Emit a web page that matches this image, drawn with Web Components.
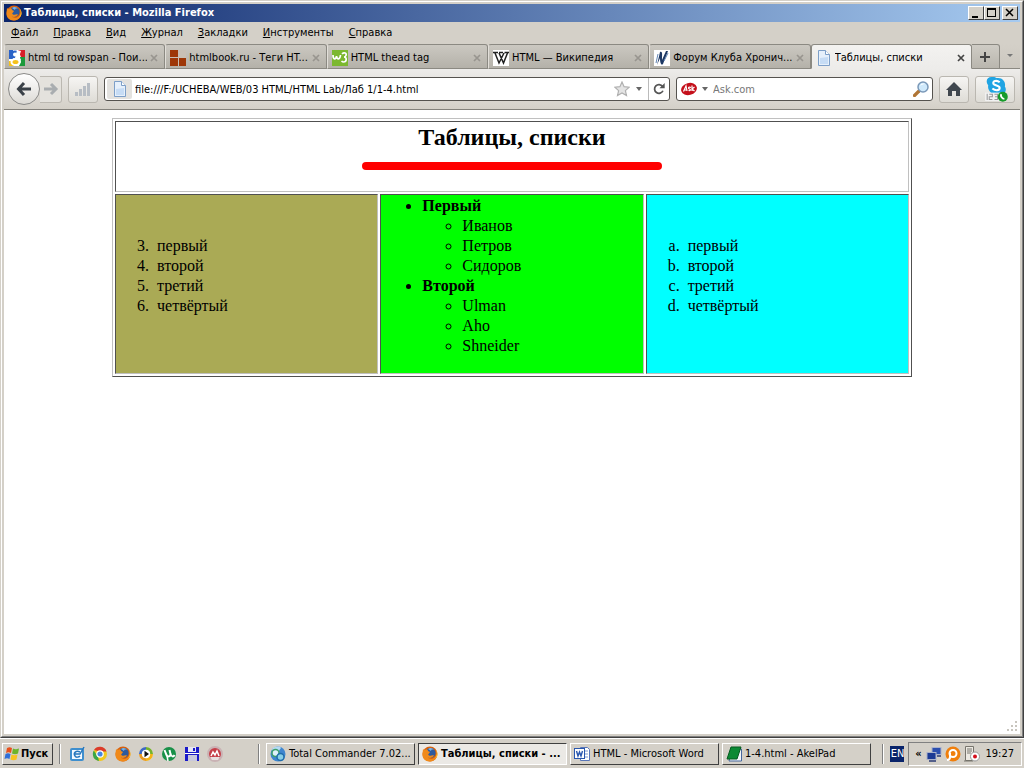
<!DOCTYPE html>
<html lang="ru">
<head>
<meta charset="utf-8">
<title>Таблицы, списки</title>
<style>
  html, body { margin: 0; height: 100%; }
  body {
    --face: #d4d0c8;
    --shadow: #808080;
    --dark: #404040;
    display: flex;
    flex-direction: column;
    min-height: 100vh;
    background: var(--face);
    color: #000;
    font: 11px/14px "DejaVu Sans Condensed", "Noto Sans", sans-serif;
  }
  xp-window { flex: 1; }
</style>
</head>
<body>
<xp-window>
  <title-bar>Таблицы, списки - Mozilla Firefox</title-bar>
  <menu-bar></menu-bar>
  <tab-strip>
    <browser-tab icon="google">html td rowspan - Пои...</browser-tab>
    <browser-tab icon="htmlbook">htmlbook.ru - Теги HT...</browser-tab>
    <browser-tab icon="w3">HTML thead tag</browser-tab>
    <browser-tab icon="wiki">HTML — Википедия</browser-tab>
    <browser-tab icon="forum">Форум Клуба Хронич...</browser-tab>
    <browser-tab icon="page" active>Таблицы, списки</browser-tab>
  </tab-strip>
  <nav-toolbar></nav-toolbar>
  <page-document></page-document>
</xp-window>
<task-bar>
  <task-button icon="globe">Total Commander 7.02...</task-button>
  <task-button icon="firefox" active>Таблицы, списки - ...</task-button>
  <task-button icon="word">HTML - Microsoft Word</task-button>
  <task-button icon="akel">1-4.html - AkelPad</task-button>
</task-bar>

<script>
const ICONS = {
  firefox: `<circle cx="8" cy="8" r="7.500" fill="#d9600c"/><circle cx="8.600" cy="7" r="5" fill="#2d5a9e"/><path d="M6 3c2-2 5-1 6 1-2-1-3 0-3 1z" fill="#7db4e2"/><path d="M1 3c1 1 2 1 3 .5C5 3 6 4 6 5l2 1-1 1.500c-1 .5-1 1.500 0 2 2 1 3-1 5 0-1 2-4 3-6 2 3 3 8 1 8.500-4 1.500 4-2 8-6.500 8C3 15.500 0 12 .5 8z" fill="#f08a1a"/><path d="M13.500 3.500c2 3 1.500 7-.5 9 3-1 3.500-6 .5-9z" fill="#ffd23c"/>`,
  google: `<rect width="16" height="16" fill="#fff"/><path d="M9 0h7v7h-4z" fill="#d8202a"/><path d="M11 7h5v9h-6l2-4z" fill="#1c9a3c"/><path d="M0 0h4v9H0z" fill="#2b62c8"/><path d="M0 11h5v5H0z" fill="#f5c21b"/><circle cx="6" cy="4.500" r="3" fill="#fff" stroke="#2b62c8" stroke-width="2"/><ellipse cx="6.500" cy="12" rx="4" ry="3" fill="#f5c21b" stroke="#fff" stroke-width="2"/><path d="M8 0l4 1-2 6 2 3-2 1-4-3z" fill="#fff"/>`,
  htmlbook: `<rect width="16" height="16" fill="#c8c0b6"/><path d="M0 0h8v7H0zM0 8h8v8H0zM9 8h7v8H9z" fill="#9e3708"/>`,
  w3: `<rect width="16" height="16" fill="#7cb82f"/><path d="M1 5c0 5 3 5 3.500 1C5 10 8 10 8.500 5M10 4c2-2 5-1 4 1.500-.4 1-1 1.500-2 1.500 3 0 3 5-.5 5-1 0-1.500-.5-2-1" fill="none" stroke="#fff" stroke-width="1.700"/>`,
  wiki: `<rect width="16" height="16" fill="#fff"/><path d="M0 2.500h5M6 2.500h4M11.500 2.500H16M2 3l4 10L11 3M6 3l4.500 10L14.500 3" fill="none" stroke="#222" stroke-width="1.500"/>`,
  forum: `<rect width="16" height="16" fill="#fff"/><path d="M3 15L6 2c3-1 2 3 2 8l4-9h2l-5 13c-2 2-3-2-3-6z" fill="#1d3864"/><path d="M10 11l4-8M2 13l2-9" stroke="#6286b5"/>`,
  page: `<path d="M2.500.5h7l4 4v11h-11z" fill="#e6f0fb" stroke="#7d9fc8"/><path d="M9.500.5v4h4" fill="#fff" stroke="#7d9fc8"/><path d="M4 8l8-1v7H4z" fill="#c6dcf5"/>`,
  star: `<path d="M8 1l2.100 4.700 5.100.5-3.800 3.400 1.100 5L8 12l-4.500 2.600 1.100-5L.8 6.200l5.100-.5z" fill="#e4e4e4" stroke="#b0b0b0" stroke-width="1.200"/>`,
  reload: `<path d="M12.500 10a5 5 0 1 1-.5-5" fill="none" stroke="#555" stroke-width="2"/><path d="M14.500 1v6h-6z" fill="#555"/>`,
  lens: `<path d="M1.500 14.500L6 10" stroke="#b07535" stroke-width="3.200" stroke-linecap="round"/><circle cx="10" cy="6" r="5" fill="#cfe9fb" stroke="#7a98b8" stroke-width="1.500"/><path d="M7 5c1-3 4-3 5-2-2 0-4 1-5 2z" fill="#fff"/>`,
  ask: `<ellipse cx="8" cy="8" rx="8" ry="6" transform="rotate(-14 8 8)" fill="#c4101b"/><path d="M2.500 10.500L5 5l1 5M3.500 9h2M10 6.500c-3-1-3 1-1.500 1.500s1 2-1 1.500M11 4.500v5.500M13.500 6L11 8l2.500 2" fill="none" stroke="#fff" stroke-width="1.200"/>`,
  back: `<path d="M8 2L2.500 8 8 14M3 8h12" fill="none" stroke="#3a4148" stroke-width="3"/>`,
  forward: `<path d="M8 3l5 5-5 5M1 8h11" fill="none" stroke="#a9adb0" stroke-width="3"/>`,
  bars: `<path d="M0 11h3v4H0zM4 8h3v7H4zM8 5h3v10H8zM12 2h3v13h-3z" fill="#b7bdc4"/>`,
  home: `<path d="M8 1L0 9h2v6h4v-5h4v5h4V9h2z" fill="#40474e"/>`,
  skype: `<path d="M8 0a6 6 0 0 1 5 1c6-1 9 4 8 8 3 5-2 9-6 7C9 18 4 13 5 8 2 4 4 0 8 0z" fill="#20a4e3"/><path d="M16 5c-3-2.500-7-1-6 1.500 1 2 6 1.500 6 4s-4 3-7 .5" fill="none" stroke="#fff" stroke-width="2"/><path d="M2 15h15v8H2z" fill="#f2f2f2"/><path d="M4 16v6M6 16.500h3v2.500H6v2.500h3M11 16.500h3v5h-3M11.500 19h2" fill="none" stroke="#9a9a9a"/><circle cx="19" cy="19" r="4.800" fill="#169b2a"/><path d="M17.500 16.500c-1 2 1 4.500 3 4.500" fill="none" stroke="#fff" stroke-width="1.800"/>`,
  flag: `<path d="M3 2c2-1 3-1 5 0L7 7C5 6 4 6 2 7z" fill="#e8501c"/><path d="M9 2.500c2 1 3 1 6 0l-1 5c-2 1-4 1-6 0z" fill="#6cb42c"/><path d="M1.500 8c2-1 3-1 5 0l-1 5c-2-1-3-1-5 0z" fill="#2f6fd8"/><path d="M7.500 8.500c2 1 4 1 6 0l-1 5c-2 1-4 1-6 0z" fill="#f7c321"/>`,
  desktop: `<rect x="1" y="2" width="14" height="13" rx="2" fill="#3f8fce"/><rect x="3" y="4" width="10" height="9" fill="#f3f9ff"/><path d="M11 6c-4-2-7 1-5 4 1 2 4 1 5 0M6 8h5L15 1" fill="none" stroke="#2677bd" stroke-width="1.500"/>`,
  chrome: `<circle cx="8" cy="8" r="7" fill="#f2c81c"/><path d="M2 4a7 7 0 0 1 12.500 1.500H8z" fill="#db3b2b"/><path d="M1.800 4.500L6 11l1 4A7 7 0 0 1 1.800 4.500z" fill="#3aa648"/><circle cx="8" cy="8" r="3.200" fill="#4487e0" stroke="#fff" stroke-width="1.200"/>`,
  player: `<circle cx="8" cy="8" r="7" fill="#e8e8f0"/><path d="M8 1a7 7 0 0 1 7 7h-3a4 4 0 0 0-4-4z" fill="#76b32b"/><path d="M15 8a7 7 0 0 1-7 7v-3a4 4 0 0 0 4-4z" fill="#f4b417"/><path d="M8 15a7 7 0 0 1-7-7h3a4 4 0 0 0 4 4z" fill="#e89a20"/><path d="M1 8a7 7 0 0 1 7-7v3a4 4 0 0 0-4 4z" fill="#3d68c2"/><circle cx="8" cy="8" r="4.200" fill="#fff"/><path d="M6.500 4.800v6.400L11 8z" fill="#111"/>`,
  utorrent: `<circle cx="8" cy="8" r="7" fill="#189048"/><path d="M3.500 4l2 5c1 2 4 2 4-1l-1-4M9.500 8c1 3 3 3 4 1" fill="none" stroke="#fff" stroke-width="2"/><path d="M6 10l1 5" stroke="#fff" stroke-width="1.500"/>`,
  floppy: `<path d="M1 1h14v14H1z" fill="#1a1ac8"/><path d="M4 1h8v5H4z" fill="#e6e6f2"/><path d="M4 9h9v6H4z" fill="#c8c8dc"/><path d="M1 7h14v1H1z" fill="#fff"/><path d="M9 2h2v3H9z" fill="#1a1ac8"/>`,
  media: `<circle cx="8" cy="8" r="7" fill="#c63f49" stroke="#c9b2b4" stroke-width="2"/><path d="M4 10l2-4 2 3 2-4 2 5" fill="none" stroke="#fff" stroke-width="1.500"/><path d="M3 11h10l-2 3H5z" fill="#e9e0e0"/>`,
  globe: `<circle cx="8" cy="8" r="7.500" fill="#3f86cf"/><path d="M2 3c3-3 8-3 9-1L8 6 4 7z" fill="#b5dbf4"/><circle cx="5.500" cy="7" r="3.500" fill="#dff1fa" stroke="#3e9f6b" stroke-width="1.500"/><circle cx="10.500" cy="11" r="3.500" fill="#88cfe8" stroke="#1f6dac" stroke-width="1.500"/>`,
  word: `<path d="M6.500 1.500h7l2 2v11h-9z" fill="#fff" stroke="#5976b8"/><path d="M11 5h3M11 8h3M11 11h3" stroke="#7d96cc"/><rect x=".5" y="2.500" width="10" height="10" fill="#fff" stroke="#2a57ae"/><path d="M2.500 5l1.500 5 1.500-4L7 10l1.500-5" fill="none" stroke="#2a57ae" stroke-width="1.400"/>`,
  akel: `<path d="M6 3h9.500v12H3z" fill="#f4f7fb" stroke="#47679c"/><path d="M5 1h10l-4 12H1z" fill="#0d8a34" stroke="#065b20"/>`,
  network: `<rect x="6" y="1.500" width="9" height="7" fill="#2c4fae" stroke="#aab2cc"/><rect x="1" y="6.500" width="9" height="7" fill="#1c3a94" stroke="#aab2cc"/><path d="M3 15h7M11 10h4" stroke="#55608a" stroke-width="2"/>`,
  avast: `<circle cx="8" cy="8" r="7.500" fill="#f07f0c"/><circle cx="8" cy="7.500" r="3.500" fill="none" stroke="#fff" stroke-width="2"/><path d="M5 7v4c0 2-1 3-3 3" fill="none" stroke="#fff" stroke-width="2"/>`,
  recorder: `<path d="M1.500.5h8v14h-8z" fill="#ece9e2" stroke="#77746c"/><path d="M3 3h5M3 5h5M3 7h4M0 15h9" stroke="#77746c"/><circle cx="11" cy="10.500" r="4.500" fill="#fff" stroke="#999"/><circle cx="11" cy="10.500" r="2" fill="#d4101c"/>`
};

const RESET = `*,:host{box-sizing:border-box}button,input{font:inherit;color:inherit;margin:0;padding:0;border:0;background:none;outline:0}`;

function define(name, css, html, setup) {
  const template = document.createElement("template");
  template.innerHTML = `<style>${RESET}${css}</style>${html}`;
  customElements.define(name, class extends HTMLElement {
    static observedAttributes = ["name", "icon"];
    constructor() {
      super();
      this.attachShadow({ mode: "open" }).append(template.content.cloneNode(true));
    }
    connectedCallback() { if (setup) setup(this, this.shadowRoot); }
    attributeChangedCallback() { if (setup) setup(this, this.shadowRoot); }
  });
}

const passIcon = (el, root) => root.querySelector("ui-icon").setAttribute("name", el.getAttribute("icon"));

define("ui-icon", `:host{display:block;flex:none;width:16px;height:16px}svg{display:block;width:100%;height:100%}`,
  `<svg viewBox="0 0 16 16" aria-hidden="true"></svg>`, (el, root) => {
    const svg = root.querySelector("svg");
    svg.setAttribute("viewBox", el.getAttribute("box") || "0 0 16 16");
    svg.innerHTML = ICONS[el.getAttribute("name")] || "";
  });

define("xp-window", `
  :host{display:flex;flex-direction:column;border:1px solid var(--face);border-right-color:var(--dark);border-bottom-color:var(--dark)}
  div{flex:1;display:flex;flex-direction:column;padding:2px;border:1px solid #fff;border-right-color:var(--shadow);border-bottom-color:var(--shadow)}
  ::slotted(page-document){flex:1}`,
  `<div><slot></slot></div>`);

define("title-bar", `
  :host{display:flex;align-items:center;height:18px;gap:2px;padding:0 2px;color:#fff;font-weight:bold;background:linear-gradient(90deg,#0a246a,#a6caf0)}
  span{flex:1}
  .box{display:flex}
  button{width:16px;height:14px;background:var(--face);border:1px solid #fff;border-right-color:var(--dark);border-bottom-color:var(--dark)}
  .close{margin-left:2px}
  svg{display:block;width:14px;height:12px}`,
  `<ui-icon name="firefox"></ui-icon><span><slot></slot></span>
  <div class="box">
    <button aria-label="Свернуть"><svg viewBox="0 0 14 12"><path d="M3 9h6v2H3z"/></svg></button>
    <button aria-label="Развернуть"><svg viewBox="0 0 14 12"><path d="M2 1h9v9H2zM3 3v6h7V3z" fill-rule="evenodd"/></svg></button>
    <button class="close" aria-label="Закрыть"><svg viewBox="0 0 14 12"><path d="M3 2l7 7M10 2L3 9" stroke="#000" stroke-width="1.500"/></svg></button>
  </div>`);

define("menu-bar", `
  :host{display:flex;height:22px;align-items:center;background:var(--face)}
  button{padding:0 8px 0 7px}`,
  ["Файл", "Правка", "Вид", "Журнал", "Закладки", "Инструменты", "Справка"]
    .map(t => `<button><u>${t[0]}</u>${t.slice(1)}</button>`).join(""));

define("tab-strip", `
  :host{display:flex;height:25px;background:linear-gradient(var(--face),#cbc7bf)}
  ::slotted(browser-tab){flex:1 1 0}
  button{display:grid;place-items:center}
  .add{width:28px;border:1px solid #8b8982;border-left:0;border-radius:0 3px 0 0;background:linear-gradient(#cfccc5,#b9b6ae)}
  .list{width:20px;border-bottom:1px solid #8b8982}`,
  `<slot></slot>
  <button class="add" aria-label="Новая вкладка"><svg width="12" height="12"><path d="M6 1v10M1 6h10" stroke="#444" stroke-width="2"/></svg></button>
  <button class="list" aria-label="Список вкладок"><svg width="6" height="4"><path d="M0 0h6L3 3z" fill="#777"/></svg></button>`);

define("browser-tab", `
  :host{display:flex;align-items:center;gap:3px;min-width:0;padding:2px 6px 0 4px;border:1px solid #8b8982;border-left-color:#e2dfd9;border-radius:3px 3px 0 0;background:linear-gradient(#cbc8c1,#b4b1a9)}
  :host([active]){border-bottom-color:#edecea;border-left-color:#8b8982;background:linear-gradient(#f3f2f0,#edecea)}
  span{flex:1;min-width:0;white-space:nowrap;overflow:hidden}
  button{width:8px;height:8px;color:#98958f}
  :host([active]) button{color:#444}
  svg{display:block}`,
  `<ui-icon></ui-icon><span><slot></slot></span>
  <button aria-label="Закрыть вкладку"><svg width="8" height="8"><path d="M1 1l6 6M7 1L1 7" stroke="currentColor" stroke-width="1.700"/></svg></button>`,
  passIcon);

define("nav-toolbar", `
  :host{display:flex;align-items:center;gap:6px;height:41px;padding:0 5px 0 4px;border-bottom:1px solid #83817b;background:linear-gradient(#edecea,#d4d0c8)}
  button{display:grid;place-items:center;flex:none}
  .history{display:flex;align-items:center}
  .back{width:32px;height:32px;border:1px solid #8a8a88;border-radius:50%;background:linear-gradient(#fff,#dcdad5)}
  .forward{width:22px;height:27px;border:1px solid #bbb8b1;border-left:0;border-radius:0 3px 3px 0;background:#e4e2dd}
  .tool{height:27px;border:1px solid #bab7b0;border-radius:3px;background:linear-gradient(#f6f5f3,#dedcd6)}
  .square{width:30px}
  .wide{width:40px}
  .field{display:flex;align-items:center;height:24px;border:1px solid #55534f;border-radius:3px;background:#fff}
  .address{flex:571 1 0;gap:3px;padding-left:2px}
  .search{flex:252 1 0;gap:5px;padding:0 3px 0 4px}
  .identity{display:grid;place-items:center;width:25px;height:20px;background:#e3e2df;border-radius:2px}
  input{flex:1;min-width:0;height:22px}
  input::placeholder{color:#777;opacity:1}
  .drop{width:12px;height:22px}
  .reload{width:21px;height:22px;border-left:1px solid #bbb}
  .reload ui-icon{width:14px;height:14px}
  .wide ui-icon{width:25px;height:25px}`,
  `<div class="history">
    <button class="back" aria-label="Назад"><ui-icon name="back"></ui-icon></button>
    <button class="forward" aria-label="Вперёд"><ui-icon name="forward"></ui-icon></button>
  </div>
  <button class="tool square" aria-label="Статистика"><ui-icon name="bars"></ui-icon></button>
  <div class="field address">
    <span class="identity"><ui-icon name="page"></ui-icon></span>
    <input type="text" aria-label="Адрес" value="file:///F:/UCHEBA/WEB/03 HTML/HTML Lab/Лаб 1/1-4.html">
    <button aria-label="Добавить в закладки"><ui-icon name="star"></ui-icon></button>
    <button class="drop" aria-label="Журнал адресов"><svg width="6" height="4"><path d="M0 0h6L3 4z" fill="#666"/></svg></button>
    <button class="reload" aria-label="Обновить"><ui-icon name="reload"></ui-icon></button>
  </div>
  <div class="field search">
    <ui-icon name="ask"></ui-icon>
    <button aria-label="Поисковые системы"><svg width="6" height="4"><path d="M0 0h6L3 4z" fill="#666"/></svg></button>
    <input type="text" aria-label="Поиск" placeholder="Ask.com">
    <button aria-label="Искать"><ui-icon name="lens"></ui-icon></button>
  </div>
  <button class="tool square" aria-label="Домой"><ui-icon name="home"></ui-icon></button>
  <button class="tool wide" aria-label="Skype"><ui-icon name="skype" box="0 0 24 24"></ui-icon></button>`);

define("page-document", `
  :host{display:flex;flex-direction:column;background:#fff;padding:8px;font:16px/20px "Liberation Serif",serif}
  table{width:80%;margin:0 auto;table-layout:fixed;border-collapse:separate;border-spacing:2px;border:1px solid #c0c0c0;border-right-color:#505050;border-bottom-color:#505050}
  th,td{padding:1px;border:1px solid #c0c0c0;border-top-color:#505050;border-left-color:#505050}
  th{font-weight:normal}
  h1{margin:0 0 11px;font-size:24px;line-height:28px}
  hr{width:300px;height:8px;margin:0 auto 20px;border:0;border-radius:4px;background:#f00}
  ol,ul{margin:0 0 16px;padding-left:40px}
  ul ul{margin:0;font-weight:normal}
  ol li::marker{content:counter(list-item) ".\\00a0\\00a0"}
  ol[type=a] li::marker{content:counter(list-item,lower-alpha) ".\\00a0\\00a0"}
  .names{font-weight:bold}
  .olive{background:#aa5}
  .lime{background:#0f0}
  .aqua{background:#0ff}
  .grip{display:block;margin:auto -8px -8px auto}`,
  `<table>
    <tr><th colspan="3"><h1>Таблицы, списки</h1><hr></th></tr>
    <tr>
      <td class="olive"><ol start="3"><li>первый</li><li>второй</li><li>третий</li><li>четвёртый</li></ol></td>
      <td class="lime"><ul class="names">
        <li>Первый<ul><li>Иванов</li><li>Петров</li><li>Сидоров</li></ul></li>
        <li>Второй<ul><li>Ulman</li><li>Aho</li><li>Shneider</li></ul></li>
      </ul></td>
      <td class="aqua"><ol type="a"><li>первый</li><li>второй</li><li>третий</li><li>четвёртый</li></ol></td>
    </tr>
  </table>
  <svg class="grip" width="13" height="13"><path d="M8 0h2v2H8zM4 4h2v2H4zM8 4h2v2H8zM0 8h2v2H0zM4 8h2v2H4zM8 8h2v2H8z" fill="#c8c5be"/></svg>`);

define("task-bar", `
  :host{display:flex;align-items:center;height:30px;gap:6px;padding:1px 2px 0;border-top:1px solid #fff;background:var(--face)}
  .start{display:flex;align-items:center;gap:1px;width:51px;height:22px;padding:0 1px;font-weight:bold;border:1px solid #fff;border-right-color:var(--dark);border-bottom-color:var(--dark)}
  .rule{width:2px;height:20px;border-left:1px solid var(--shadow);border-right:1px solid #fff}
  .quick{display:flex;gap:7px;width:185px;padding-left:2px}
  .tasks{flex:1;display:flex;gap:3px}
  ::slotted(task-button){flex:0 1 149px;min-width:0}
  .status{display:flex;align-items:center;gap:4px}
  .lang{color:#fff;background:#0a246a;width:14px;height:16px;line-height:16px;text-align:center;overflow:hidden}
  .tray{display:flex;align-items:center;gap:3px;height:24px;padding:0 7px 0 4px;border:1px solid var(--shadow);border-right-color:#fff;border-bottom-color:#fff}
  .tray button{font-weight:bold;width:10px}
  time{margin-left:2px}`,
  `<button class="start"><ui-icon name="flag"></ui-icon>Пуск</button>
  <span class="rule"></span>
  <div class="quick">${["desktop", "chrome", "firefox", "player", "utorrent", "floppy", "media"].map(n => `<button aria-label="${n}"><ui-icon name="${n}"></ui-icon></button>`).join("")}</div>
  <span class="rule"></span>
  <div class="tasks"><slot></slot></div>
  <span class="rule"></span>
  <div class="status">
    <span class="lang">EN</span>
    <div class="tray"><button>«</button><ui-icon name="network"></ui-icon><ui-icon name="avast"></ui-icon><ui-icon name="recorder"></ui-icon><time>19:27</time></div>
  </div>`);

define("task-button", `
  :host{display:block}
  button{display:flex;align-items:center;gap:3px;width:100%;height:22px;padding:0 3px;white-space:nowrap;overflow:hidden;border:1px solid #fff;border-right-color:var(--dark);border-bottom-color:var(--dark)}
  :host([active]) button{font-weight:bold;background:#ebe9e5;border-color:var(--dark) #fff #fff var(--dark)}`,
  `<button><ui-icon></ui-icon><slot></slot></button>`,
  passIcon);
</script>
</body>
</html>
